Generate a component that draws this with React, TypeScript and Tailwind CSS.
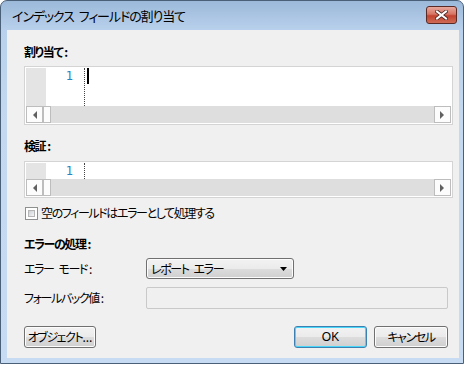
const jp = "font-['Noto_Sans_CJK_JP','Liberation_Sans',sans-serif] [font-feature-settings:'palt']";

function Sp() {
  return <span className="inline-block w-[5px]" />;
}

function Colon() {
  return <span className="ml-[2px] tracking-normal">:</span>;
}

function Arrow({ dir }: { dir: "left" | "right" }) {
  return (
    <svg width="5" height="8" viewBox="0 0 5 8">
      <path d={dir === "left" ? "M5 0 L1 4 L5 8Z" : "M0 0 L4 4 L0 8Z"} fill="#606060" />
    </svg>
  );
}

function ScrollBar() {
  return (
    <div className="flex h-[17px] bg-[#dedede]">
      <div className="flex w-[17px] items-center justify-center border border-[#bdbdbd] bg-[#fcfcfc]">
        <Arrow dir="left" />
      </div>
      <div className="w-[8px] border border-[#bdbdbd] bg-[#fcfcfc]" />
      <div className="flex-1" />
      <div className="flex w-[17px] items-center justify-center border border-[#bdbdbd] bg-[#fcfcfc]">
        <Arrow dir="right" />
      </div>
    </div>
  );
}

function Editor({ caret }: { caret?: boolean }) {
  return (
    <div className="w-[429px] border border-[#d4d4d4] bg-white p-px">
      <div className={`flex ${caret ? "h-[38px]" : "h-[16px]"}`}>
        <div className="w-[20px] bg-[#e4e4e4]" />
        <div className="w-[38px] pr-[11px] text-right font-['DejaVu_Sans_Mono',monospace] text-[12px] leading-[16px] tracking-normal text-[#2b82c0]">
          1
        </div>
        <div className="h-full border-l border-dotted border-[#444]" />
        {caret && <div className="ml-[2px] h-[16px] w-[2px] bg-black" />}
      </div>
      <ScrollBar />
    </div>
  );
}

function Button({ children, primary, width }: { children: React.ReactNode; primary?: boolean; width: string }) {
  return (
    <div
      className={`${width} flex h-[22px] items-center justify-center whitespace-nowrap rounded-[3px] border ${
        primary ? "border-[#3c7fb1] shadow-[inset_0_0_0_1px_#48d7f8]" : "border-[#707070] shadow-[inset_0_0_0_1px_#fcfcfc]"
      } bg-[linear-gradient(#f2f2f2_0%,#ebebeb_50%,#dddddd_50%,#cfcfcf_100%)] text-[12px] text-black`}
    >
      {children}
    </div>
  );
}

export default function App() {
  return (
    <div className={`h-[366px] w-[470px] overflow-hidden bg-white ${jp}`}>
      <div className="flex h-[364px] w-[464px] flex-col rounded-t-[7px] border border-[#4a5f78] bg-[linear-gradient(#9cb9da_0px,#b9d1ec_30px,#c4d9f0_120px,#c7dcf2_100%)]">
        {/* Title bar */}
        <div className="flex h-[29px] items-center justify-between pl-[11px] pr-[6px]">
          <span className="whitespace-nowrap text-[13px] leading-[16px] tracking-[-1.1px] text-black">
            インデックス<Sp />フィールドの割り当て
          </span>
          <div className="mt-[-2px] flex h-[18px] w-[31px] items-center justify-center rounded-[3px] border border-[#5c2a25] bg-[linear-gradient(#e8a89c_0%,#d77564_45%,#c2432f_55%,#cf6b56_100%)]">
            <svg width="13" height="10" viewBox="0 0 13 10">
              <path d="M2 1.5 L11 8.5 M11 1.5 L2 8.5" stroke="#4a2420" strokeWidth="3.6" strokeLinecap="square" />
              <path d="M2 1.5 L11 8.5 M11 1.5 L2 8.5" stroke="#ffffff" strokeWidth="2" strokeLinecap="square" />
            </svg>
          </div>
        </div>

        {/* Client area */}
        <div className="mb-[5px] ml-[6px] mr-[4px] flex flex-1 flex-col bg-[#f0f0f0] pl-[17px] pt-[14px] text-[12px] tracking-[-1.4px] text-black">
          <div className="h-[16px] font-bold leading-[16px]">
            割り当て<Colon />
          </div>
          <div className="mt-[6px]">
            <Editor caret />
          </div>

          <div className="mt-[13px] h-[16px] font-bold leading-[16px]">
            検証<Colon />
          </div>
          <div className="mt-[7px]">
            <Editor />
          </div>

          <div className="mt-[7px] flex h-[16px] items-center gap-[3px] leading-[16px]">
            <div className="ml-px h-[13px] w-[13px] border border-[#8e8f8f] bg-white p-[2px]">
              <div className="h-full w-full border border-[#b5b5b5] bg-[linear-gradient(135deg,#cbcfd5,#f6f6f6)]" />
            </div>
            <span>空のフィールドはエラーとして処理する</span>
          </div>

          <div className="mt-[15px] h-[16px] font-bold leading-[16px]">
            エラーの処理<Colon />
          </div>

          <div className="mt-[6px] flex h-[21px] items-center">
            <span className="w-[122px]">
              エラー<Sp />モード<Colon />
            </span>
            <div className="flex h-[21px] w-[148px] items-center justify-between rounded-[3px] border border-[#707070] bg-[linear-gradient(#f2f2f2_0%,#ebebeb_50%,#dddddd_50%,#cfcfcf_100%)] pl-[4px] pr-[6px] shadow-[inset_0_0_0_1px_#fcfcfc]">
              <span>
                レポート<Sp />エラー
              </span>
              <svg width="7" height="4" viewBox="0 0 7 4">
                <path d="M0 0 L7 0 L3.5 4Z" fill="#000" />
              </svg>
            </div>
          </div>

          <div className="mt-[8px] flex h-[22px] items-center">
            <span className="w-[122px]">
              フォールバック値<Colon />
            </span>
            <div className="h-[22px] w-[302px] rounded-[2px] border border-[#c9c9c9] bg-[#f0f0f0]" />
          </div>

          <div className="mt-[17px] flex items-center pr-[11px]">
            <Button width="w-[72px]">
              オブジェクト<span className="tracking-normal">...</span>
            </Button>
            <div className="flex-1" />
            <div className="flex gap-[7px]">
              <Button width="w-[73px]" primary>
                <span className="font-['Liberation_Sans',sans-serif] tracking-normal">OK</span>
              </Button>
              <Button width="w-[74px]">キャンセル</Button>
            </div>
          </div>
        </div>
      </div>
    </div>
  );
}
